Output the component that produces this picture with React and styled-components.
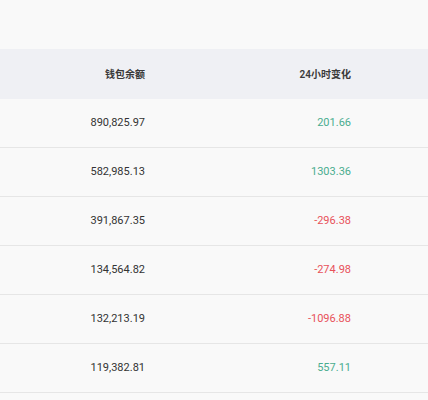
import React from "react";
import styled, { createGlobalStyle } from "styled-components";

const Global = createGlobalStyle`
  html, body { margin: 0; padding: 0; background: #f9f9f9; }
  body { font-family: Roboto, "Noto Sans CJK SC", sans-serif; }
`;

const Page = styled.div`
  width: 428px;
  height: 400px;
  overflow: hidden;
  background: #f9f9f9;
  padding-top: 49px;
  box-sizing: border-box;
`;

const Table = styled.div`
  display: flex;
  flex-direction: column;
`;

const HeaderRow = styled.div`
  display: grid;
  grid-template-columns: 145px 206px 1fr;
  height: 50px;
  align-items: center;
  background: #eff0f4;
`;

const Row = styled.div`
  display: grid;
  grid-template-columns: 145px 206px 1fr;
  height: 48px;
  align-items: center;
  border-bottom: 1px solid #e6e6e6;
`;

const HeadCell = styled.div`
  text-align: right;
  font-size: 10px;
  font-weight: 600;
  color: #3a3a3a;
  padding-bottom: 2px;
  font-family: Roboto, "Noto Sans CJK SC", sans-serif;
`;

const Cell = styled.div`
  text-align: right;
  font-size: 11px;
  font-weight: 400;
  color: ${(p) => (p.$tone === "up" ? "#4aad8f" : p.$tone === "down" ? "#e8515a" : "#333")};
  padding-bottom: 1px;
`;

const rows = [
  ["890,825.97", "201.66"],
  ["582,985.13", "1303.36"],
  ["391,867.35", "-296.38"],
  ["134,564.82", "-274.98"],
  ["132,213.19", "-1096.88"],
  ["119,382.81", "557.11"],
];

export default function App() {
  return (
    <Page>
      <Global />
      <Table>
        <HeaderRow>
          <HeadCell>钱包余额</HeadCell>
          <HeadCell>24小时变化</HeadCell>
          <div />
        </HeaderRow>
        {rows.map(([bal, chg]) => (
          <Row key={bal}>
            <Cell>{bal}</Cell>
            <Cell $tone={chg.startsWith("-") ? "down" : "up"}>{chg}</Cell>
            <div />
          </Row>
        ))}
      </Table>
    </Page>
  );
}
